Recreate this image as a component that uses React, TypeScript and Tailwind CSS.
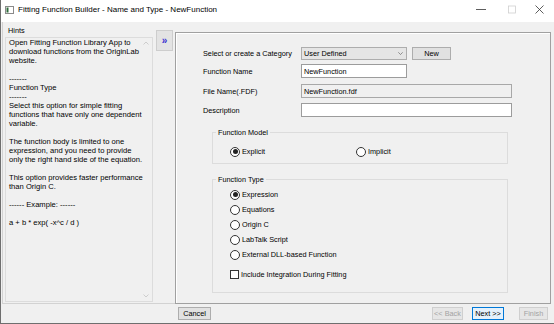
import React from "react";

const hints = [
  "Open Fitting Function Library App to",
  "download functions from the OriginLab",
  "website.",
  "",
  "-------",
  "Function Type",
  "-------",
  "Select this option for simple fitting",
  "functions that have only one dependent",
  "variable.",
  "",
  "The function body is limited to one",
  "expression, and you need to provide",
  "only the right hand side of the equation.",
  "",
  "This option provides faster performance",
  "than Origin C.",
  "",
  "------ Example: ------",
  "",
  "a + b * exp( -x^c / d )",
];

function Radio({ checked, label }: { checked?: boolean; label: string }) {
  return (
    <div className="flex items-center">
      <span className="flex h-[10px] w-[10px] items-center justify-center rounded-full border border-[#333] bg-white">
        {checked && <span className="h-[5px] w-[5px] rounded-full bg-[#222]" />}
      </span>
      <span className="ml-[2px]">{label}</span>
    </div>
  );
}

function Button({
  label,
  width,
  disabled,
  active,
}: {
  label: string;
  width: string;
  disabled?: boolean;
  active?: boolean;
}) {
  return (
    <div
      className={`flex h-[13px] items-center justify-center border ${width} ${
        active
          ? "border-[#0078d7] bg-[#e5f1fb] text-black"
          : disabled
          ? "border-[#cfcfcf] bg-[#e6e6e6] text-[#a3a3a3]"
          : "border-[#adadad] bg-[#e1e1e1] text-black"
      }`}
    >
      {label}
    </div>
  );
}

export default function App() {
  return (
    <div className="flex h-[324px] w-[554px] flex-col overflow-hidden border-b border-l border-[#6e6e6e] bg-[#f0f0f0] font-['Liberation_Sans',Arial,sans-serif] text-[7.3px] leading-[9px] text-black">
      {/* Title bar */}
      <div className="flex h-[22px] items-start bg-white pt-[5px]">
        <svg className="ml-[4px] mt-[0.5px]" width="9" height="8" viewBox="0 0 9 8">
          <rect x="0.5" y="0.5" width="8" height="7" fill="#fff" stroke="#8a8a8a" />
          <rect x="1.5" y="1.5" width="2" height="5" fill="#2e6b3a" />
        </svg>
        <span className="ml-[4px] text-[8px]">Fitting Function Builder - Name and Type - NewFunction</span>
        <div className="ml-auto flex items-center">
          <svg width="10" height="9" viewBox="0 0 10 9" className="mr-[22px]">
            <line x1="0" y1="4.5" x2="10" y2="4.5" stroke="#333" strokeWidth="0.8" />
          </svg>
          <svg width="8" height="9" viewBox="0 0 8 9" className="mr-[19px]">
            <rect x="0.5" y="1" width="7" height="7" fill="none" stroke="#cfcfcf" strokeWidth="0.8" />
          </svg>
          <svg width="9" height="9" viewBox="0 0 9 9" className="mr-[10px]">
            <path d="M0.5 0.5 L8.5 8.5 M8.5 0.5 L0.5 8.5" stroke="#333" strokeWidth="0.8" />
          </svg>
        </div>
      </div>

      {/* Body */}
      <div className="flex h-[282px]">
        <div className="ml-[1px] flex w-[173px] border-b border-l border-[#d2d2d2]">
          <div className="flex w-[153px] flex-col">
            <div className="pl-[5px] pt-[3.5px]">Hints</div>
            <div className="ml-[2px] mt-[2.5px] flex h-[265px] w-[148px] border border-[#dcdcdc] bg-[#f0f0f0] text-[7.6px]">
              <div className="flex-1 pl-[3px]">
                {hints.map((line, i) => (
                  <div key={i} className="h-[9px] whitespace-nowrap">
                    {line}
                  </div>
                ))}
              </div>
              <div className="flex w-[10px] flex-col items-center justify-between py-[3px] pr-[2px]">
                <svg width="6" height="4" viewBox="0 0 6 4">
                  <path d="M0.5 3.5 L3 1 L5.5 3.5" fill="none" stroke="#c4c4c4" strokeWidth="0.8" />
                </svg>
                <svg width="6" height="4" viewBox="0 0 6 4">
                  <path d="M0.5 0.5 L3 3 L5.5 0.5" fill="none" stroke="#c4c4c4" strokeWidth="0.8" />
                </svg>
              </div>
            </div>
          </div>
          <div className="pt-[8px]">
            <div className="flex h-[21px] w-[17px] items-center justify-center border border-[#cdcdcd] bg-[#e3e3e3] text-[10px] font-bold text-[#3a32d0]">
              »
            </div>
          </div>
        </div>

        {/* Right panel */}
        <div className="mt-[10px] h-[272px] w-[376px] border border-[#a0a0a0] shadow-[inset_1px_1px_0_#ffffff]">
          <div className="pl-[27px] pt-[14px]">
            <div className="flex h-[13px] items-center">
              <div className="w-[98px]">Select or create a Category</div>
              <div className="flex h-[13px] w-[106px] items-center justify-between border border-[#adadad] bg-[#e5e5e5] pl-[2px] pr-[3px]">
                <span>User Defined</span>
                <svg width="5" height="3" viewBox="0 0 5 3">
                  <path d="M0.3 0.3 L2.5 2.5 L4.7 0.3" fill="none" stroke="#555" strokeWidth="0.6" />
                </svg>
              </div>
              <div className="ml-[5px]">
                <Button label="New" width="w-[39px]" />
              </div>
            </div>
            <div className="mt-[4px] flex h-[14px] items-center">
              <div className="w-[98px]">Function Name</div>
              <div className="flex h-[14px] w-[106px] items-center border border-[#9c9c9c] bg-white pl-[2px]">NewFunction</div>
            </div>
            <div className="mt-[6px] flex h-[14px] items-center">
              <div className="w-[98px]">File Name(.FDF)</div>
              <div className="flex h-[14px] w-[211px] items-center border border-[#a8a8a8] bg-[#f0f0f0] pl-[2px]">NewFunction.fdf</div>
            </div>
            <div className="mt-[5px] flex h-[14px] items-center">
              <div className="w-[98px]">Description</div>
              <div className="h-[14px] w-[211px] border border-[#9c9c9c] bg-white" />
            </div>

            <fieldset className="ml-[9px] mt-[11px] w-[296px] border border-[#dcdcdc]">
              <legend className="ml-[3px] px-[2px]">Function Model</legend>
              <div className="mb-[7px] mt-[10px] flex h-[9px] items-center pl-[17px]">
                <div className="w-[126px]">
                  <Radio checked label="Explicit" />
                </div>
                <Radio label="Implicit" />
              </div>
            </fieldset>

            <fieldset className="ml-[9px] mt-[11px] w-[296px] border border-[#dcdcdc] pb-[9.5px] pl-[17px] pt-[3px]">
              <legend className="-ml-[14px] px-[2px]">Function Type</legend>
              {["Expression", "Equations", "Origin C", "LabTalk Script", "External DLL-based Function"].map((t, i) => (
                <div key={t} className="flex h-[15px] items-center">
                  <Radio checked={i === 0} label={t} />
                </div>
              ))}
              <div className="mt-[5px] flex h-[15px] items-center">
                <span className="h-[9px] w-[9px] border border-[#333] bg-white" />
                <span className="ml-[2px]">Include Integration During Fitting</span>
              </div>
            </fieldset>
          </div>
        </div>
      </div>

      {/* Bottom buttons */}
      <div className="flex h-[19px] items-start pl-[177px] pt-[3px]">
        <Button label="Cancel" width="w-[33px]" />
        <div className="ml-auto mr-[6px] flex">
          <Button label="<< Back" width="w-[31px]" disabled />
          <div className="ml-[9px]">
            <Button label="Next >>" width="w-[32px]" active />
          </div>
          <div className="ml-[15px]">
            <Button label="Finish" width="w-[29px]" disabled />
          </div>
        </div>
      </div>
    </div>
  );
}
